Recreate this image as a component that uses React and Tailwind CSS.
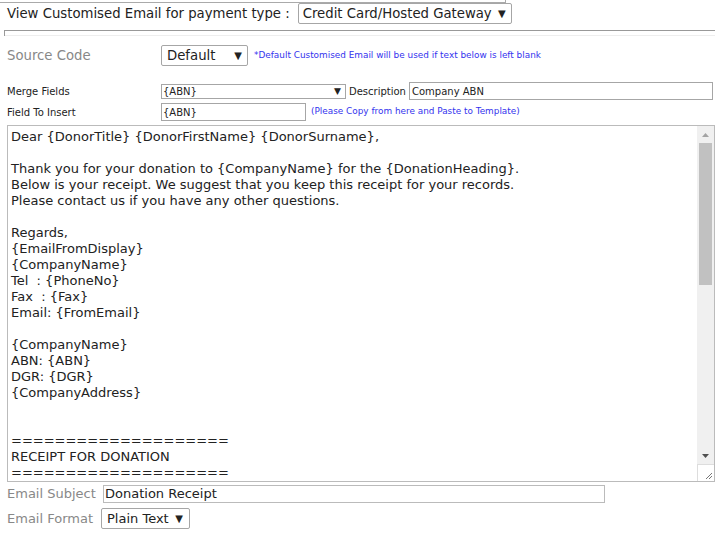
const LINES = [
  'Dear {DonorTitle} {DonorFirstName} {DonorSurname},',
  '',
  'Thank you for your donation to {CompanyName} for the {DonationHeading}.',
  'Below is your receipt. We suggest that you keep this receipt for your records.',
  'Please contact us if you have any other questions.',
  '',
  'Regards,',
  '{EmailFromDisplay}',
  '{CompanyName}',
  'Tel  : {PhoneNo}',
  'Fax  : {Fax}',
  'Email: {FromEmail}',
  '',
  '{CompanyName}',
  'ABN: {ABN}',
  'DGR: {DGR}',
  '{CompanyAddress}',
  '',
  '',
  '====================',
  'RECEIPT FOR DONATION',
  '====================',
]

const font = { fontFamily: 'Verdana, "DejaVu Sans", sans-serif' }

function Caret() {
  return <span className="text-[10px] leading-none">▼</span>
}

export default function App() {
  return (
    <div className="relative w-[715px] h-[533px] overflow-hidden bg-white text-[#222]" style={font}>
      {/* cut-off box above */}
      <div className="w-[506px] h-[3px] border-b border-r border-[#aaa]" />

      {/* payment type row */}
      <div className="flex items-center h-[21px] pl-[7px]">
        <span className="text-[13.25px] leading-none whitespace-nowrap">View Customised Email for payment type :</span>
        <div className="ml-[8px] w-[214px] h-[21px] border border-[#a6a6a6] rounded-[2px] flex items-center justify-between pl-[4px] pr-[5px] text-[13.25px] whitespace-nowrap">
          <span>Credit Card/Hosted Gateway</span>
          <Caret />
        </div>
      </div>

      {/* fieldset top edge */}
      <div className="ml-[4px] mt-[6px] h-[6px] border-t border-l border-[#999]">
        <div className="mt-[4px] border-t border-[#eee]" />
      </div>

      {/* source code */}
      <div className="flex items-center mt-[9px] h-[21px]">
        <span className="w-[161px] pl-[7px] text-[13.25px] text-[#888]">Source Code</span>
        <div className="w-[87px] h-[21px] border border-[#a6a6a6] rounded-[2px] flex items-center justify-between pl-[5px] pr-[5px] text-[13.25px]">
          <span>Default</span>
          <Caret />
        </div>
        <span className="ml-[6px] text-[8.9px] text-[#3333ee] whitespace-nowrap">*Default Customised Email will be used if text below is left blank</span>
      </div>

      {/* merge fields */}
      <div className="flex items-center mt-[16px] h-[18px] text-[10px]">
        <span className="w-[161px] pl-[7px]">Merge Fields</span>
        <div className="w-[185px] h-[15px] border border-[#a6a6a6] flex items-center justify-between pl-[1px] pr-[4px]">
          <span>{'{ABN}'}</span>
          <span className="text-[9px] leading-none">▼</span>
        </div>
        <span className="ml-[3px] w-[60px]">Description</span>
        <div className="w-[304px] h-[18px] border border-[#a6a6a6] flex items-center pl-[2px]">Company ABN</div>
      </div>

      {/* field to insert */}
      <div className="flex items-center mt-[3px] h-[18px] text-[10px]">
        <span className="w-[161px] pl-[7px]">Field To Insert</span>
        <div className="w-[145px] h-[18px] border border-[#a6a6a6] flex items-center pl-[1px]">{'{ABN}'}</div>
        <span className="ml-[5px] text-[8.9px] text-[#3333ee] whitespace-nowrap">(Please Copy from here and Paste to Template)</span>
      </div>

      {/* template body */}
      <div className="ml-[7px] mt-[4px] w-[708px] h-[357px] border border-[#bbb] flex">
        <div className="flex-1 overflow-hidden pl-[3px] pt-[3px] text-[13px] leading-[16px] whitespace-pre">
          {LINES.map((l, i) => (
            <div key={i} className="h-[16px]">{l}</div>
          ))}
        </div>
        <div className="w-[17px] flex flex-col">
          <div className="flex-1 bg-[#f0f0f0] flex flex-col items-center">
            <div className="h-[17px] flex items-center justify-center">
              <svg width="7" height="4" viewBox="0 0 7 4"><path d="M3.5 0L7 4H0z" fill="#a3a3a3" /></svg>
            </div>
            <div className="w-[13px] h-[142px] bg-[#c1c1c1]" />
            <div className="flex-1" />
            <div className="h-[17px] flex items-center justify-center">
              <svg width="7" height="4" viewBox="0 0 7 4"><path d="M0 0H7L3.5 4z" fill="#505050" /></svg>
            </div>
          </div>
          <div className="h-[17px] bg-white border-t border-l border-[#ddd] flex items-end justify-end">
            <svg width="9" height="9" viewBox="0 0 9 9" className="mb-[1px] mr-[1px]">
              <path d="M8 2L2 8M8 5L5 8" stroke="#777" strokeWidth="1" />
            </svg>
          </div>
        </div>
      </div>

      {/* email subject */}
      <div className="flex items-center mt-[3px] h-[18px]">
        <span className="w-[103px] shrink-0 pl-[7px] text-[13px] text-[#888] whitespace-nowrap">Email Subject</span>
        <div className="w-[502px] h-[18px] border border-[#bbb] flex items-center pl-[1px] text-[13px]">Donation Receipt</div>
      </div>

      {/* email format */}
      <div className="flex items-center mt-[5px] h-[21px]">
        <span className="w-[101px] shrink-0 pl-[7px] text-[13px] text-[#888] whitespace-nowrap">Email Format</span>
        <div className="w-[89px] h-[21px] border border-[#a6a6a6] rounded-[2px] flex items-center justify-between pl-[5px] pr-[6px] text-[13px]">
          <span>Plain Text</span>
          <Caret />
        </div>
      </div>
    </div>
  )
}
